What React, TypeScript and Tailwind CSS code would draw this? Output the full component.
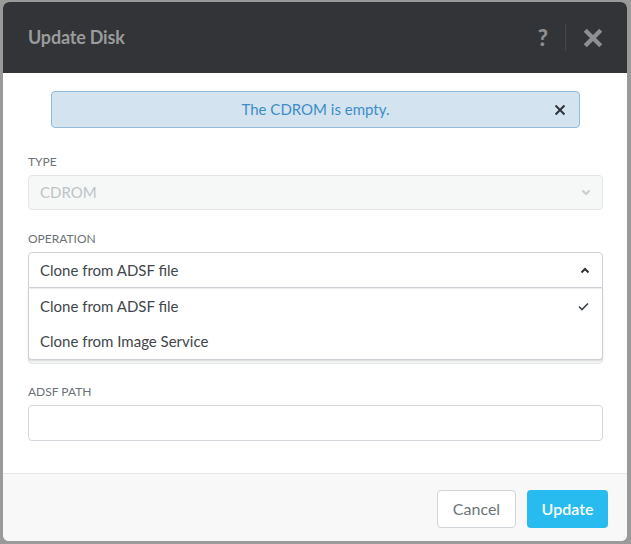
import React from "react";

const font = { fontFamily: "Lato, 'Open Sans', Arial, sans-serif" };

const Cross = ({ size, stroke, color }: any) => (
  <svg width={size} height={size} viewBox="0 0 16 16">
    <path d="M3 3 L13 13 M13 3 L3 13" stroke={color} strokeWidth={stroke} strokeLinecap="square" />
  </svg>
);

const Chevron = ({ up, color }: any) => (
  <svg width="10" height="7" viewBox="0 0 10 7">
    <path
      d={up ? "M1.5 5.5 L5 2 L8.5 5.5" : "M1.5 1.5 L5 5 L8.5 1.5"}
      stroke={color}
      strokeWidth="2"
      fill="none"
    />
  </svg>
);

const Label = ({ children }: any) => (
  <div className="text-[12px] leading-[14px] text-[#6d7278] mb-[6px] uppercase">{children}</div>
);

export default function App() {
  return (
    <div style={font} className="w-[631px] h-[544px] bg-[#9a9a9a] pt-[2px] pl-[3px] pr-[4px] overflow-hidden">
      <div className="w-[624px] h-[539px] rounded-[6px] overflow-hidden bg-white flex flex-col">
        {/* header */}
        <div className="h-[71px] bg-[#333437] flex items-center justify-between pl-[25px] pr-[24px]">
          <div className="text-[18px] font-bold text-[#9a9b9c] tracking-[-0.2px]">Update Disk</div>
          <div className="flex items-center">
            <span className="text-[22px] font-black text-[#8e8f90] leading-none">?</span>
            <div className="w-px h-[27px] bg-[#454648] mx-[17px]" />
            <Cross size={20} stroke={3.4} color="#8e8f90" />
          </div>
        </div>

        {/* body */}
        <div className="flex-1 pl-[25px] pr-[24px] pt-[18px]">
          <div className="mx-[23px] h-[37px] rounded-[4px] border border-[#93bbdc] bg-[#d4e3f0] relative flex items-center justify-center">
            <span className="text-[15px] text-[#3d8dc5]">The CDROM is empty.</span>
            <div className="absolute right-[13px] top-[12px]">
              <Cross size={12} stroke={2.6} color="#2e3236" />
            </div>
          </div>

          <div className="mt-[27px]">
            <Label>Type</Label>
            <div className="h-[35px] rounded-[4px] border border-[#e3e6e8] bg-[#f6f7f7] flex items-center justify-between pl-[11px] pr-[11px]">
              <span className="text-[15px] text-[#bfc3c7]">CDROM</span>
              <Chevron color="#c9cdd1" />
            </div>
          </div>

          <div className="mt-[22px] relative">
            <Label>Operation</Label>
            <div className="h-[36px] rounded-t-[4px] border border-[#cdd1d5] bg-white flex items-center justify-between pl-[11px] pr-[12px]">
              <span className="text-[15px] text-[#41464b]">Clone from ADSF file</span>
              <Chevron up color="#2e3236" />
            </div>
            {/* field hidden behind the open list */}
            <div className="mt-[20px]">
              <div className="h-[14px] mb-[6px]" />
              <div className="h-[36px] rounded-[4px] border border-[#e3e6e8] bg-[#f6f7f7]" />
            </div>
            <div className="absolute left-0 right-0 top-[56px] bg-white border border-t-0 border-[#cdd1d5] rounded-b-[4px] shadow-[0_1px_2px_rgba(0,0,0,0.12)] z-10">
              <div className="h-px bg-[#eceef0]" />
              <div className="h-[35px] flex items-center justify-between pl-[11px] pr-[13px]">
                <span className="text-[15px] text-[#41464b]">Clone from ADSF file</span>
                <svg width="11" height="9" viewBox="0 0 11 9">
                  <path d="M1 4.5 L4 7.5 L10 1.5" stroke="#3d4247" strokeWidth="1.6" fill="none" />
                </svg>
              </div>
              <div className="h-[35px] flex items-center pl-[11px]">
                <span className="text-[15px] text-[#41464b]">Clone from Image Service</span>
              </div>
            </div>
          </div>

          <div className="mt-[21px]">
            <Label>ADSF Path</Label>
            <div className="h-[36px] rounded-[4px] border border-[#d3d7db] bg-white" />
          </div>
        </div>

        {/* footer */}
        <div className="h-[68px] border-t border-[#e6e7e8] bg-[#f8f8f8] flex items-center justify-end gap-[11px] pr-[19px] pt-[2px]">
          <button className="w-[79px] h-[38px] rounded-[4px] border border-[#cfd4d9] bg-white text-[16px] text-[#6e7378]">
            Cancel
          </button>
          <button className="w-[81px] h-[38px] rounded-[4px] bg-[#27bbf0] text-[16px] font-semibold text-white">
            Update
          </button>
        </div>
      </div>
    </div>
  );
}
